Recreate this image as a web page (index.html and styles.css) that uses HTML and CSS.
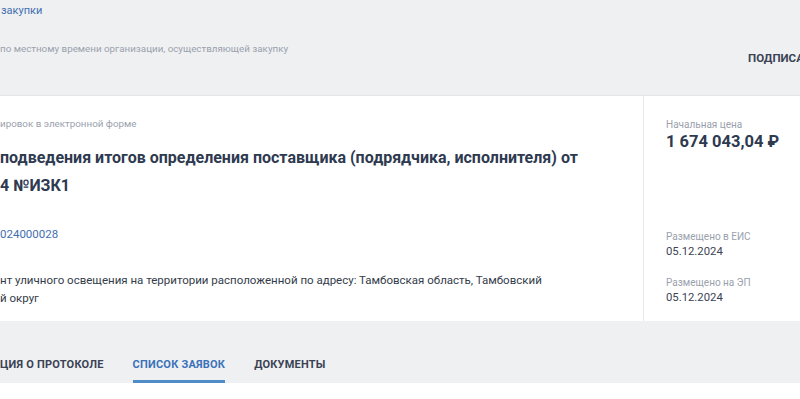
FILE: index.html
```html
<!DOCTYPE html>
<html lang="ru">
<head>
<meta charset="utf-8">
<link rel="stylesheet" href="styles.css">
</head>
<body>
<div class="page">
  <section class="head">
    <a class="crumb">закупки</a>
    <div class="head-row">
      <p class="note">по местному времени организации, осуществляющей закупку</p>
      <span class="subscribe">ПОДПИСАТЬСЯ</span>
    </div>
  </section>
  <section class="card">
    <div class="main">
      <p class="kind">ировок в электронной форме</p>
      <h1 class="title">подведения итогов определения поставщика (подрядчика, исполнителя) от<br>4 №ИЗК1</h1>
      <a class="num">024000028</a>
      <p class="desc">нт уличного освещения на территории расположенной по адресу: Тамбовская область, Тамбовский<br>й округ</p>
    </div>
    <aside class="side">
      <div class="price-block">
        <p class="label">Начальная цена</p>
        <p class="price">1 674 043,04 ₽</p>
      </div>
      <div class="dates">
        <div class="date">
          <p class="label">Размещено в ЕИС</p>
          <p class="value">05.12.2024</p>
        </div>
        <div class="date">
          <p class="label">Размещено на ЭП</p>
          <p class="value">05.12.2024</p>
        </div>
      </div>
    </aside>
  </section>
  <nav class="tabs">
    <span class="tab">ЦИЯ О ПРОТОКОЛЕ</span>
    <span class="tab active">СПИСОК ЗАЯВОК</span>
    <span class="tab">ДОКУМЕНТЫ</span>
  </nav>
</div>
</body>
</html>
```
FILE: styles.css
```css
* { box-sizing: border-box; }
html, body { margin: 0; padding: 0; }
body {
  width: 800px;
  height: 399px;
  overflow: hidden;
  background: #ffffff;
  font-family: Roboto, "Noto Sans", sans-serif;
  color: #2f3a4d;
}
p, h1 { margin: 0; }
.page { width: 800px; }

.head {
  height: 96px;
  background: #eff0f2;
  border-bottom: 1px solid #e3e5e8;
  padding-top: 4px;
}
.crumb {
  display: block;
  font-size: 11px;
  line-height: 14px;
  color: #3f6fae;
  padding-left: 1px;
}
.head-row {
  display: grid;
  grid-template-columns: 748px auto;
  margin-top: 24px;
}
.note {
  font-size: 9.8px;
  line-height: 14px;
  color: #9aa1ad;
}
.subscribe {
  margin-top: 9px;
  font-size: 11.5px;
  line-height: 14px;
  font-weight: 700;
  color: #3a4254;
  white-space: nowrap;
}

.card {
  display: flex;
  height: 225px;
  background: #ffffff;
}
.main {
  width: 644px;
  border-right: 1px solid #e6e8eb;
  padding-top: 21px;
}
.kind {
  font-size: 9.8px;
  line-height: 14px;
  color: #9aa1ad;
}
.title {
  margin-top: 13px;
  font-size: 16px;
  line-height: 28px;
  font-weight: 700;
  color: #2e3a4f;
}
.num {
  display: block;
  margin-top: 26px;
  font-size: 11.5px;
  line-height: 16px;
  color: #3f6fae;
}
.desc {
  margin-top: 29px;
  font-size: 11.5px;
  line-height: 18px;
  color: #343c4a;
}
.side {
  flex: 1;
  padding: 22px 0 0 22px;
  display: flex;
  flex-direction: column;
}
.label {
  font-size: 10px;
  line-height: 14px;
  color: #9aa1ad;
}
.price {
  font-size: 16.5px;
  line-height: 20px;
  font-weight: 700;
  color: #2e3a4f;
}
.dates {
  margin-top: 78px;
  display: flex;
  flex-direction: column;
  gap: 17px;
}
.value {
  margin-top: 1px;
  font-size: 11.3px;
  line-height: 14px;
  color: #3a4254;
}

.tabs {
  height: 62px;
  background: #eff0f2;
  display: flex;
  align-items: flex-end;
  gap: 29px;
}
.tab {
  font-size: 11px;
  line-height: 14px;
  font-weight: 700;
  color: #3a4254;
  padding-bottom: 8px;
  border-bottom: 3px solid transparent;
  letter-spacing: 0.22px;
}
.tab.active {
  color: #3a72b9;
  border-bottom-color: #4f8bc6;
}
```
